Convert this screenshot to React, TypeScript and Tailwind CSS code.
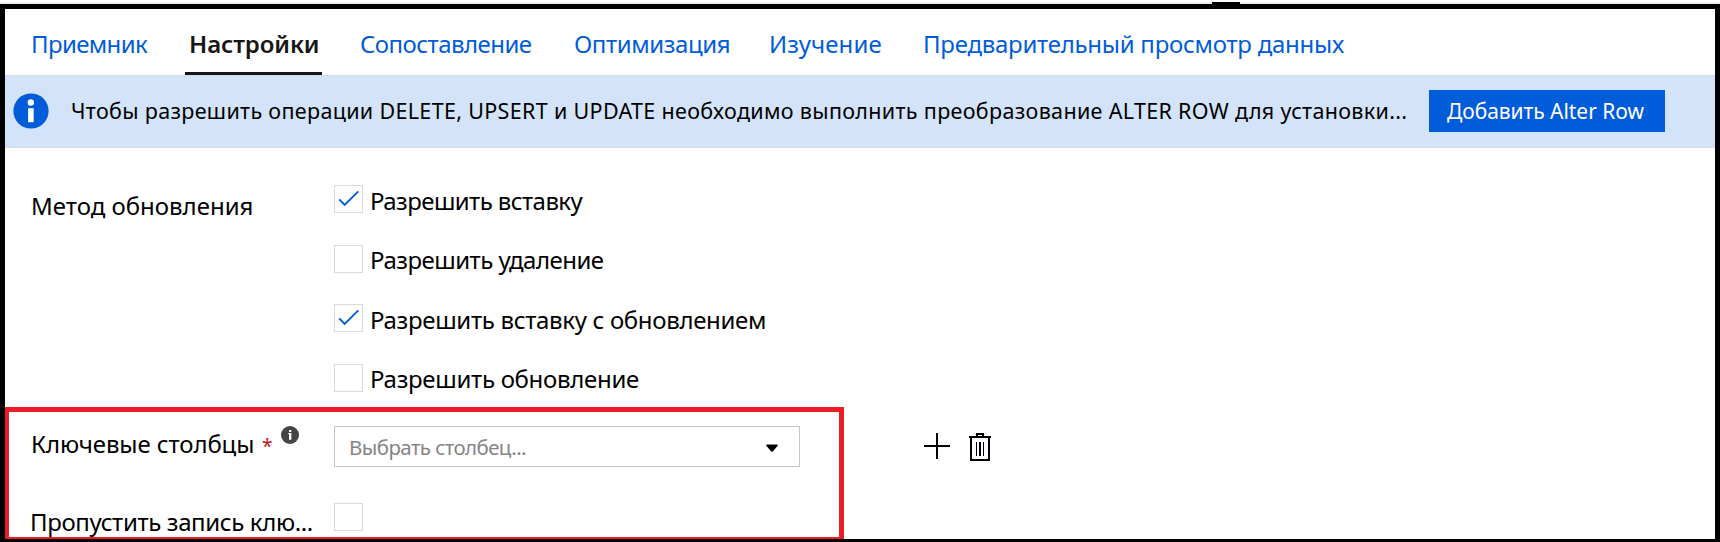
import React from "react";

const tabs = [
  { label: "Приемник", cls: "w-[155px] pl-px tracking-[-0.63px] text-[#015cda]" },
  { label: "Настройки", cls: "mr-[38px] w-[137px] border-b-[3px] border-[#161616] pl-1 font-semibold tracking-[-0.1px] text-[#161616]" },
  { label: "Сопоставление", cls: "w-[213px] tracking-[-0.54px] text-[#015cda]" },
  { label: "Оптимизация", cls: "w-[196px] pl-px tracking-[-0.42px] text-[#015cda]" },
  { label: "Изучение", cls: "w-[154px] tracking-[0.08px] text-[#015cda]" },
  { label: "Предварительный просмотр данных", cls: "tracking-[-0.26px] text-[#015cda]" },
];

const methods = [
  { label: "Разрешить вставку", on: true, row: "h-[60px]", cls: "tracking-[-0.58px]" },
  { label: "Разрешить удаление", on: false, row: "h-[59px]", cls: "-mt-px tracking-[-0.51px]" },
  { label: "Разрешить вставку с обновлением", on: true, row: "h-[60px]", cls: "tracking-[-0.32px]" },
  { label: "Разрешить обновление", on: false, row: "h-[62px]", cls: "-mt-px tracking-[-0.3px]" },
];

function Checkbox({ on }: { on: boolean }) {
  return (
    <span role="checkbox" aria-checked={on} className="block h-7 w-[29px] shrink-0 border border-[#dadada] bg-white">
      {on && (
        <svg viewBox="0 0 27 26" className="h-[26px] w-[27px]" fill="none" stroke="#015cda" strokeWidth="1.9">
          <path d="M4.2 13.3 9.7 19 23.3 5.3" />
        </svg>
      )}
    </span>
  );
}

function Tabs() {
  return (
    <nav className="flex h-[66px] shrink-0 pl-[25px] text-2xl leading-8 whitespace-nowrap">
      {tabs.map((t) => (
        <button key={t.label} className={`flex shrink-0 items-start pt-[19px] text-left ${t.cls}`}>
          {t.label}
        </button>
      ))}
    </nav>
  );
}

function Banner() {
  return (
    <div className="flex h-[73px] shrink-0 items-start border-y border-[#d9dcde] bg-[#d3e3f9]">
      <svg viewBox="0 0 36 36" className="mt-[17px] ml-2 h-9 w-9 shrink-0">
        <circle cx="18" cy="18" r="17.6" fill="#015cda" />
        <circle cx="17.8" cy="9.5" r="3.2" fill="#fff" />
        <rect x="15.1" y="15.2" width="5.6" height="14" fill="#fff" />
      </svg>
      <span className="mt-[19px] ml-[22px] w-[1358px] shrink-0 text-[21.5px] leading-8 tracking-[0.33px] whitespace-nowrap text-black">
        Чтобы разрешить операции DELETE, UPSERT и UPDATE необходимо выполнить преобразование ALTER ROW для установки...
      </span>
      <button className="mt-[14px] h-[42px] w-[236px] shrink-0 bg-[#015cda] pl-[18px] text-left text-[21px] leading-[42px] tracking-[-0.05px] whitespace-nowrap text-white">
        Добавить Alter Row
      </button>
    </div>
  );
}

export default function App() {
  return (
    <div className="flex h-[542px] w-[1720px] flex-col overflow-hidden bg-white font-['Noto_Sans',sans-serif] text-black">
      <div className="mt-0.5 flex h-0.5 shrink-0 bg-[#efefef]">
        <div className="ml-[1212px] h-0.5 w-7 bg-black" />
      </div>
      <main className="relative flex h-[538px] flex-col overflow-hidden border-x-[5px] border-t-[5px] border-b-[3px] border-black">
        <Tabs />
        <Banner />
        <form className="flex flex-col pt-[37px] pl-[25px] text-2xl leading-8 whitespace-nowrap">
          <div className="flex">
            <span className="w-[304px] shrink-0 pt-[5px] pl-px">Метод обновления</span>
            <div className="flex flex-col">
              {methods.map((m) => (
                <label key={m.label} className={`flex items-start ${m.row}`}>
                  <Checkbox on={m.on} />
                  <span className={`ml-[7px] ${m.cls}`}>{m.label}</span>
                </label>
              ))}
            </div>
          </div>
          <div className="flex h-[77px] items-start">
            <div className="flex w-[304px] shrink-0 items-start pt-0.5 pl-px">
              <span className="w-[231px] tracking-[-0.1px]">Ключевые столбцы</span>
              <span className="mt-0.5 w-[19px] text-[19px] text-[#b5101c]">*</span>
              <svg viewBox="0 0 18 18" className="-mt-0.5 h-[18px] w-[18px]">
                <circle cx="9" cy="9" r="9" fill="#444" />
                <rect x="8" y="4" width="2.4" height="2" fill="#fff" />
                <path d="M7.2 7h3.2v6.7H8V8H7.2Z" fill="#fff" />
              </svg>
            </div>
            <div className="flex h-[41px] w-[466px] shrink-0 items-center justify-between border border-[#c6c6c6] pr-[21px] pl-[14px]">
              <span className="text-[20.5px] tracking-[-0.58px] text-[#858585]">Выбрать столбец...</span>
              <svg viewBox="0 0 12 8" className="mt-0.5 h-2 w-3">
                <path d="M1 .5h10q1.2.4.5 1.6L7 7.3q-1 .7-2 0L.5 2.100Q-.2.9 1 .5Z" fill="#000" />
              </svg>
            </div>
            <svg viewBox="0 0 26 26" className="mt-[7px] ml-[124px] h-[26px] w-[26px] shrink-0">
              <path d="M0 13h26M13 0v26" stroke="#000" strokeWidth="2" />
            </svg>
            <svg viewBox="0 0 22 28" className="mt-[7px] ml-[19px] h-7 w-[22px] shrink-0" fill="none" stroke="#000">
              <path d="M2 4v23h18V4" fill="#fbfbff" strokeWidth="2" />
              <path d="M0 4h22M8 4V1h6v3" strokeWidth="2" />
              <path d="M7.500 9v14M14.500 9v14" strokeWidth="1" />
              <path d="M11 9v14" strokeWidth="2" />
            </svg>
          </div>
          <div className="flex items-start">
            <span className="w-[304px] shrink-0 pt-[3px] tracking-[-0.37px]">Пропустить запись клю...</span>
            <Checkbox on={false} />
          </div>
        </form>
        <div className="pointer-events-none absolute top-[398px] left-0 h-[132px] w-[839px] border-t-[5px] border-r-[5px] border-b-2 border-l-4 border-[#ee1c25]" />
      </main>
    </div>
  );
}
